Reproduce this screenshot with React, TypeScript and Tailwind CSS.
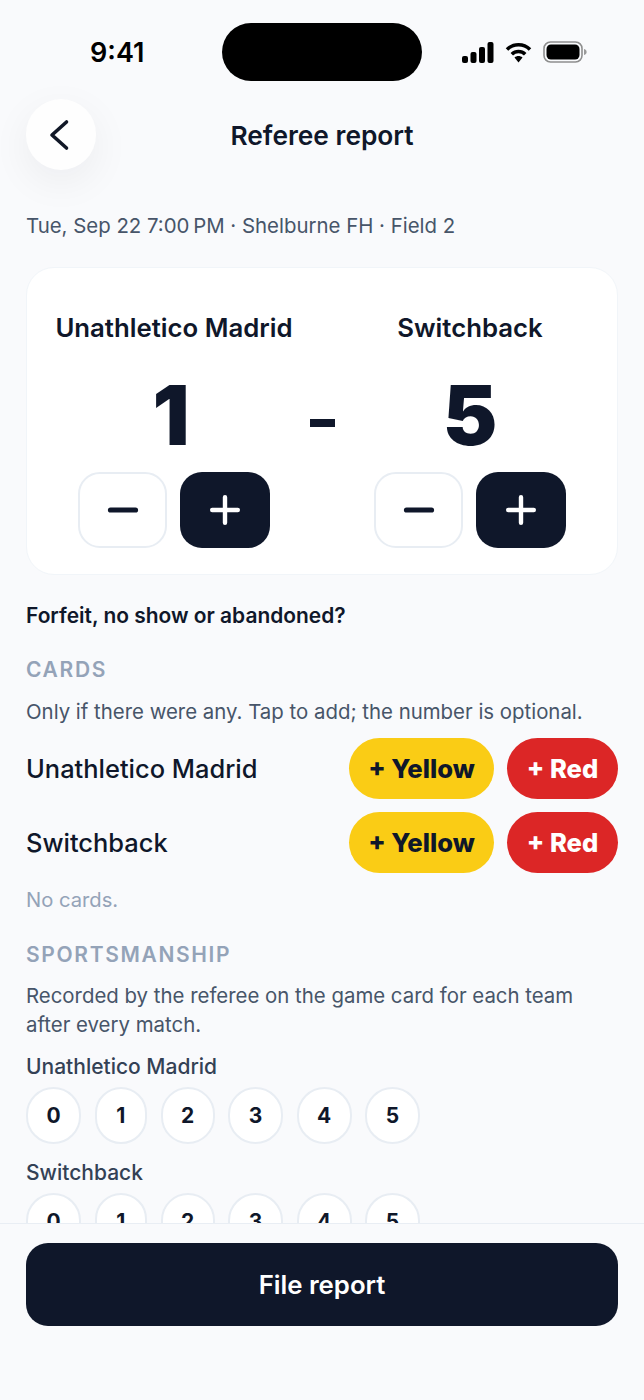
const font = { fontFamily: 'Inter, "Liberation Sans", sans-serif' };

function Minus({ className }: { className: string }) {
  return (
    <svg width="32" height="8" viewBox="0 0 32 8" className={className}>
      <path d="M3.5 4H28.5" stroke="currentColor" strokeWidth="5.2" strokeLinecap="round" />
    </svg>
  );
}

function Plus({ className }: { className: string }) {
  return (
    <svg width="30" height="30" viewBox="0 0 30 30" className={className}>
      <path d="M2.2 15H27.8M15 2.2V27.8" stroke="currentColor" strokeWidth="4.4" strokeLinecap="round" />
    </svg>
  );
}

function Stepper() {
  return (
    <div className="flex justify-center gap-[13px]">
      <button className="flex h-[76px] w-[89px] items-center justify-center rounded-[22px] border-2 border-[#e8edf3] bg-white">
        <Minus className="text-[#0f172a]" />
      </button>
      <button className="flex h-[76px] w-[90px] items-center justify-center rounded-[22px] bg-[#0f172a]">
        <Plus className="text-white" />
      </button>
    </div>
  );
}

function TeamScore({ name, score, scoreClass }: { name: string; score: number; scoreClass: string }) {
  return (
    <div className="flex flex-col items-center">
      <div className="whitespace-nowrap text-[25.76px] font-semibold leading-[30px] text-[#0f172a]">{name}</div>
      <div className={`mt-[29px] text-[82px] font-black leading-[88px] text-[#0f172a] ${scoreClass}`}>{score}</div>
      <div className="mt-[12px]">
        <Stepper />
      </div>
    </div>
  );
}

function CardRow({ name }: { name: string }) {
  return (
    <div className="flex h-[61px] items-center justify-between">
      <div className="pt-[2px] text-[25.45px] font-medium text-[#0f172a]">{name}</div>
      <div className="flex gap-[13px]">
        <button className="flex h-[61px] w-[145px] items-center justify-center rounded-full bg-[#facc15] pt-[2px] text-[25.6px] font-extrabold text-[#0f172a]">
          + Yellow
        </button>
        <button className="flex h-[61px] w-[111px] items-center justify-center rounded-full bg-[#dc2626] pt-[2px] text-[25.6px] font-extrabold text-white">
          + Red
        </button>
      </div>
    </div>
  );
}

function Rating() {
  const items = [
    { v: 0, w: 'w-[55px]' },
    { v: 1, w: 'w-[52.5px]' },
    { v: 2, w: 'w-[54px]' },
    { v: 3, w: 'w-[55px]' },
    { v: 4, w: 'w-[55px]' },
    { v: 5, w: 'w-[55px]' },
  ];
  return (
    <div className="flex gap-[13.5px]">
      {items.map((i) => (
        <button
          key={i.v}
          className={`flex h-[57px] shrink-0 items-center justify-center rounded-full border-2 border-[#e8edf3] bg-white text-[21px] font-bold text-[#0f172a] ${i.w}`}
        >
          {i.v}
        </button>
      ))}
    </div>
  );
}

export default function App() {
  return (
    <div style={font} className="flex h-[1400px] w-[644px] flex-col overflow-hidden bg-[#f9fafc]">
      <div className="flex h-[99px] shrink-0 items-start pl-[90px] pr-[57px] pt-[23px]">
        <div className="mt-[12px] w-[132px] text-[27px] font-semibold leading-[36px] text-black">9:41</div>
        <div className="h-[58px] w-[200px] rounded-full bg-black" />
        <div className="ml-auto mt-[18px] flex items-center gap-[11px]">
          <svg width="32" height="21" viewBox="0 0 32 21" className="text-black">
            <rect x="0" y="14" width="6" height="7" rx="2" fill="currentColor" />
            <rect x="8.5" y="10" width="6" height="11" rx="2" fill="currentColor" />
            <rect x="17" y="5" width="6" height="16" rx="2" fill="currentColor" />
            <rect x="25.5" y="0" width="6" height="21" rx="2" fill="currentColor" />
          </svg>
          <svg width="27" height="21" viewBox="0 0 27 21" className="text-black">
            <path d="M2 7.5C8.5 1.2 18.5 1.2 25 7.5" fill="none" stroke="currentColor" strokeWidth="3.6" />
            <path d="M6.8 12.2C10.6 8.6 16.4 8.6 20.2 12.2" fill="none" stroke="currentColor" strokeWidth="3.6" />
            <path d="M9.5 15.6C11.8 13.6 15.2 13.6 17.5 15.6L13.5 20.5Z" fill="currentColor" />
          </svg>
          <svg width="44" height="22" viewBox="0 0 44 22" className="text-black">
            <rect x="1" y="1" width="38" height="20" rx="6.5" fill="none" stroke="#8e8e8e" strokeWidth="1.6" />
            <rect x="3.5" y="3.5" width="33" height="15" rx="4.5" fill="currentColor" />
            <path d="M41 8C43 8.6 43.6 9.8 43.6 11C43.6 12.2 43 13.4 41 14Z" fill="#9a9a9a" />
          </svg>
        </div>
      </div>

      <div className="grid shrink-0 grid-cols-[70px_1fr_70px] items-center px-[26px]">
        <button className="flex h-[71px] w-[70px] items-center justify-center rounded-full bg-[#fefefe] shadow-[0_12px_40px_rgba(15,23,42,0.06)]">
          <svg width="24" height="32" viewBox="0 0 24 32" className="ml-[-7px] text-[#111827]">
            <path d="M20.5 3L6 16L20.5 29" fill="none" stroke="currentColor" strokeWidth="3.6" strokeLinecap="round" strokeLinejoin="round" />
          </svg>
        </button>
        <div className="pt-[2px] text-center text-[26.3px] font-semibold text-[#0f172a]">Referee report</div>
        <div />
      </div>

      <div className="min-h-0 flex-1 overflow-hidden px-[26px]">
        <div className="mt-[41px] text-[20.4px] leading-[30px] text-[#475569]">
          Tue, Sep 22 7:00{'\u202f'}PM · Shelburne FH · Field 2
        </div>

        <div className="mt-[26px] grid h-[308px] grid-cols-[minmax(0,1fr)_60px_minmax(0,1fr)] rounded-[28px] border border-[#f1f5f9] bg-white px-[29px] pt-[45px]">
          <TeamScore name="Unathletico Madrid" score={1} scoreClass="pr-[6px]" />
          <div className="mx-auto mt-[106px] h-[8px] w-[25px] bg-[#0f172a]" />
          <TeamScore name="Switchback" score={5} scoreClass="" />
        </div>

        <div className="mt-[26px] text-[20.93px] font-semibold leading-[30px] text-[#0f172a]">
          Forfeit, no show or abandoned?
        </div>

        <div className="mt-[24px] text-[21px] font-semibold leading-[30px] tracking-[1.65px] text-[#94a3b8]">CARDS</div>
        <div className="mt-[12px] text-[20.4px] leading-[30px] text-[#475569]">
          Only if there were any. Tap to add; the number is optional.
        </div>
        <div className="mt-[11px] flex flex-col gap-[13px]">
          <CardRow name="Unathletico Madrid" />
          <CardRow name="Switchback" />
        </div>
        <div className="mt-[12px] text-[20.2px] leading-[30px] text-[#94a3b8]">No cards.</div>

        <div className="mt-[25px] text-[21px] font-semibold leading-[30px] tracking-[1.65px] text-[#94a3b8]">SPORTSMANSHIP</div>
        <div className="mt-[11px] text-[20.4px] leading-[29px] text-[#475569]">
          Recorded by the referee on the game card for each team after every match.
        </div>
        <div className="mt-[13px] text-[21px] font-medium leading-[29px] text-[#334155]">Unathletico Madrid</div>
        <div className="mt-[6px]">
          <Rating />
        </div>
        <div className="mt-[14px] text-[21px] font-medium leading-[29px] text-[#334155]">Switchback</div>
        <div className="mt-[6px]">
          <Rating />
        </div>
      </div>

      <div className="h-[177px] shrink-0 border-t border-[#e9eef4] bg-[#f9fafc] px-[26px] pt-[19px]">
        <button className="h-[83px] w-full rounded-[22px] bg-[#0f172a] pt-[2px] text-[25.76px] font-semibold text-white">
          File report
        </button>
      </div>
    </div>
  );
}
